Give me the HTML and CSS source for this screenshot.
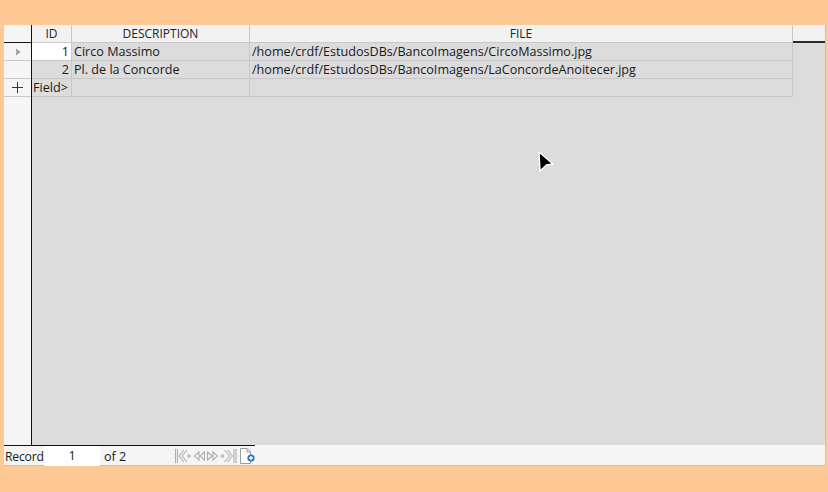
FILE: index.html
```html
<!DOCTYPE html>
<html>
<head>
<meta charset="utf-8">
<link rel="stylesheet" href="styles.css">
</head>
<body>
<div class="window">
  <div class="grid">
    <div class="rowhead-col">
      <div class="rh rh-top"></div>
      <div class="rh"><svg width="8" height="8" viewBox="0 0 8 8"><path d="M2 1 L6 4 L2 7 Z" fill="#a8a8a8"/><path d="M2 1 L6 4 L2 7" fill="none" stroke="#8a8a8a" stroke-width="0.8"/></svg></div>
      <div class="rh"></div>
      <div class="rh rh-new"><svg width="11" height="11" viewBox="0 0 11 11"><path d="M0 5.5 H11 M5.5 0 V11" stroke="#333" stroke-width="1"/></svg></div>
      <div class="rh-fill"></div>
    </div>
    <div class="data">
      <div class="row head">
        <div class="c c-id">ID</div>
        <div class="c c-desc">DESCRIPTION</div>
        <div class="c c-file">FILE</div>
        <div class="c c-rest"></div>
      </div>
      <div class="row">
        <div class="c c-id num cur">1</div>
        <div class="c c-desc">Circo Massimo</div>
        <div class="c c-file">/home/crdf/EstudosDBs/BancoImagens/CircoMassimo.jpg</div>
      </div>
      <div class="row">
        <div class="c c-id num">2</div>
        <div class="c c-desc">Pl. de la Concorde</div>
        <div class="c c-file">/home/crdf/EstudosDBs/BancoImagens/LaConcordeAnoitecer.jpg</div>
      </div>
      <div class="row">
        <div class="c c-id field">Field&gt;</div>
        <div class="c c-desc"></div>
        <div class="c c-file"></div>
      </div>
    </div>
  </div>
  <div class="navbar">
    <div class="nav-left">
      <span class="lbl">Record</span>
      <span class="recbox">1</span>
      <span class="of">of 2</span>
      <span class="icons">
        <svg width="18" height="18" viewBox="0 0 18 18"><g fill="none" stroke="#b0b0b0" stroke-width="1.1"><path d="M1.5 2 V16 M3.5 2 V16"/><path d="M10 3 L5 9 L10 15 M13 3 L8 9 L13 15"/><circle cx="15" cy="9" r="1.3"/></g></svg>
        <svg width="14" height="18" viewBox="0 0 14 18"><g fill="none" stroke="#b0b0b0" stroke-width="1.1"><path d="M7 5 L2.5 9 L7 13 Z M12.5 5 L8 9 L12.5 13 Z"/></g></svg>
        <svg width="14" height="18" viewBox="0 0 14 18"><g fill="none" stroke="#b0b0b0" stroke-width="1.1"><path d="M1.5 5 L6 9 L1.5 13 Z M7 5 L11.5 9 L7 13 Z"/></g></svg>
        <svg width="17" height="18" viewBox="0 0 17 18"><g fill="none" stroke="#b0b0b0" stroke-width="1.1"><circle cx="2.5" cy="9" r="1.3"/><path d="M4.5 3 L9.5 9 L4.5 15 M7.5 3 L12.5 9 L7.5 15"/><path d="M14 2 V16 M16 2 V16"/></g></svg>
        <svg class="newrec" width="18" height="18" viewBox="0 0 18 18"><path d="M2.5 1.5 H9 L12.5 5 V16.5 H2.5 Z" fill="#fff" stroke="#9a9a9a"/><path d="M9 1.5 V5 H12.5" fill="none" stroke="#9a9a9a"/><circle cx="13" cy="11" r="3.6" fill="#2f6fc0"/><path d="M11 11 H15 M13 9 V13" stroke="#fff" stroke-width="1.3"/></svg>
      </span>
    </div>
  </div>
  <svg class="cursor" width="20" height="24" viewBox="0 0 20 24"><path d="M2 2 L16 14 L9.5 15 L3 21 Z" fill="#000" stroke="#fff" stroke-width="1.4" stroke-linejoin="round"/></svg>
</div>
</body>
</html>
```

FILE: styles.css
```css
html, body {
  margin: 0;
  padding: 0;
  background: #ffc996;
}
body {
  width: 828px;
  height: 492px;
  overflow: hidden;
  font-family: "Open Sans", "Noto Sans", sans-serif;
  font-size: 12.6px;
  color: #1a1a1a;
}
.window {
  position: relative;
  margin: 25px 0 0 4px;
  width: 821px;
  height: 440px;
  background: #dcdcdc;
  border-right: 1px solid #c2c2c2;
  border-bottom: 1px solid #c2c2c2;
  display: flex;
  flex-direction: column;
}
.grid {
  flex: 1;
  display: flex;
  min-height: 0;
}
.rowhead-col {
  flex: none;
  width: 27px;
  background: #f5f5f5;
  border-right: 1px solid #111;
  display: flex;
  flex-direction: column;
}
.rh {
  height: 17px;
  border-bottom: 1px solid #c8c8c8;
  display: flex;
  align-items: center;
  justify-content: center;
}
.rh-top {
  border-bottom-color: #111;
}
.rh-fill {
  flex: 1;
}
.data {
  flex: 1;
  min-width: 0;
  display: flex;
  flex-direction: column;
}
.row {
  display: flex;
  height: 18px;
}
.c {
  height: 17px;
  line-height: 17px;
  border-right: 1px solid #c8c8c8;
  border-bottom: 1px solid #c8c8c8;
  padding: 0 2px;
  box-sizing: content-box;
  white-space: nowrap;
  overflow: hidden;
  flex: none;
}
.c-id { width: 35px; }
.c-desc { width: 173px; }
.c-file { width: 538px; }
.c-rest {
  flex: 1;
  border-right: none;
  border-bottom: 2px solid #2a2a2a;
  height: 16px;
}
.head .c {
  background: #f2f2f2;
  text-align: center;
  color: #222;
  font-size: 12px;
}
.num { text-align: right; }
.cur { background: #ffffff; }
.field {
  padding: 0 3px 0 1px;
}
.navbar {
  height: 20px;
  background: #f5f5f5;
  display: flex;
}
.nav-left {
  width: 251px;
  border-top: 1px solid #111;
  display: flex;
  align-items: center;
  height: 20px;
}
.lbl {
  flex: none;
  width: 39px;
  padding-left: 1px;
  white-space: nowrap;
  font-size: 12.2px;
  letter-spacing: -0.2px;
}
.recbox {
  flex: none;
  width: 56px;
  height: 20px;
  line-height: 20px;
  background: #fff;
  text-align: center;
}
.of {
  flex: none;
  padding-left: 4px;
  width: 67px;
}
.icons {
  display: flex;
  align-items: center;
  height: 20px;
  margin-left: 3px;
}
.icons svg { display: block; flex: none; }
.newrec { margin-left: 1px; }
.cursor {
  position: absolute;
  left: 533px;
  top: 125px;
}
```
